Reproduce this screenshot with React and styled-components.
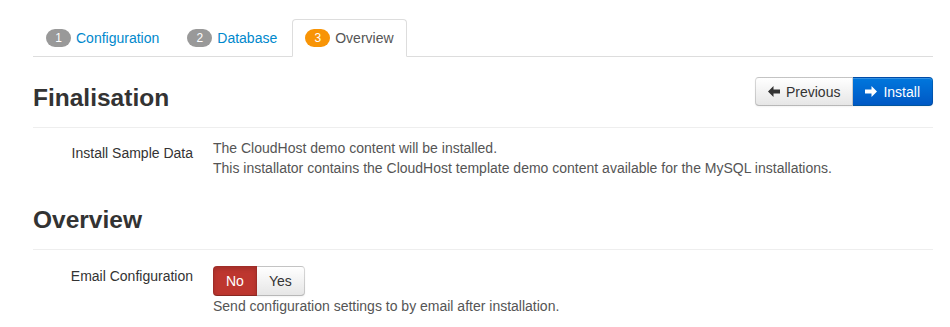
import React from 'react';
import styled, { createGlobalStyle } from 'styled-components';

const GlobalStyle = createGlobalStyle`
  body {
    margin: 0;
    background: #fff;
    font-family: "Liberation Sans", Arial, sans-serif;
    font-size: 14px;
    line-height: 20px;
    color: #333;
  }
`;

const Page = styled.div`
  padding: 19px 17px 0 33px;
`;

// pestañas del asistente
const Tabs = styled.ul`
  display: flex;
  margin: 0;
  padding: 0;
  list-style: none;
  border-bottom: 1px solid #ddd;
`;

const Tab = styled.li`
  display: flex;
  align-items: center;
  gap: 5px;
  margin: 0 2px -1px 0;
  padding: 8px 12px;
  line-height: 20px;
  border: 1px solid ${p => (p.$active ? '#ddd' : 'transparent')};
  border-bottom-color: ${p => (p.$active ? '#fff' : 'transparent')};
  border-radius: 4px 4px 0 0;
  background: ${p => (p.$active ? '#fff' : 'transparent')};
  color: ${p => (p.$active ? '#555' : '#0088cc')};
  cursor: pointer;
`;

const Badge = styled.span`
  display: inline-flex;
  align-items: center;
  justify-content: center;
  width: 25px;
  height: 18px;
  border-radius: 9px;
  background: ${p => (p.$active ? '#f89406' : '#999')};
  color: #fff;
  font-size: 12px;
  line-height: 18px;
`;

const HeaderRow = styled.div`
  display: flex;
  justify-content: space-between;
  align-items: flex-start;
  margin-top: 20px;
`;

const Heading = styled.h3`
  margin: ${p => p.$top || 0}px 0 0;
  font-size: 24.5px;
  font-weight: bold;
  line-height: 30px;
  color: #333;
`;

const Rule = styled.hr`
  margin: 14px 0 0;
  border: 0;
  border-top: 1px solid #eee;
`;

const BtnGroup = styled.div`
  display: flex;
`;

const Button = styled.button`
  display: inline-flex;
  align-items: center;
  gap: 6px;
  height: ${p => p.$h || 29}px;
  padding: 0 12px;
  font-family: inherit;
  font-size: 14px;
  line-height: 18px;
  cursor: pointer;
  border: 1px solid rgba(0, 0, 0, 0.15);
  border-bottom-color: rgba(0, 0, 0, 0.28);
  color: ${p => (p.$variant === 'default' ? '#333' : '#fff')};
  background: ${p =>
    p.$variant === 'primary'
      ? 'linear-gradient(#0077dd, #0058c4)'
      : p.$variant === 'danger'
      ? '#bd362f'
      : 'linear-gradient(#ffffff, #e6e6e6)'};
  box-shadow: ${p =>
    p.$variant === 'danger'
      ? 'inset 0 2px 4px rgba(0,0,0,0.15)'
      : 'inset 0 1px 0 rgba(255,255,255,0.2), 0 1px 2px rgba(0,0,0,0.05)'};

  &:first-child {
    border-radius: 4px 0 0 4px;
  }
  &:last-child {
    border-radius: 0 4px 4px 0;
    border-left: 0;
  }
`;

const ControlGroup = styled.div`
  display: flex;
  margin-top: ${p => p.$gap}px;
`;

const Label = styled.div`
  width: 160px;
  margin-right: 20px;
  padding-top: ${p => p.$pad || 0}px;
  text-align: right;
  color: #333;
`;

const Controls = styled.div`
  color: #555;
`;

const Help = styled.div`
  margin-top: 0;
  color: #555;
`;

function Arrow({ dir }) {
  return (
    <svg width="12" height="11" viewBox="0 0 12 11" fill="currentColor">
      {dir === 'left' ? (
        <path d="M0 5.5 L5.5 0 V3.5 H12 V7.5 H5.5 V11 Z" />
      ) : (
        <path d="M12 5.5 L6.5 0 V3.5 H0 V7.5 H6.5 V11 Z" />
      )}
    </svg>
  );
}

export default function App() {
  return (
    <Page>
      <GlobalStyle />
      <Tabs>
        <Tab><Badge>1</Badge>Configuration</Tab>
        <Tab><Badge>2</Badge>Database</Tab>
        <Tab $active><Badge $active>3</Badge>Overview</Tab>
      </Tabs>

      <HeaderRow>
        <Heading $top={6}>Finalisation</Heading>
        <BtnGroup>
          <Button $variant="default"><Arrow dir="left" />Previous</Button>
          <Button $variant="primary"><Arrow dir="right" />Install</Button>
        </BtnGroup>
      </HeaderRow>
      <Rule />

      <ControlGroup $gap={10}>
        <Label $pad={5}>Install Sample Data</Label>
        <Controls>
          The CloudHost demo content will be installed.
          <br />
          This installator contains the CloudHost template demo content available for the MySQL installations.
        </Controls>
      </ControlGroup>

      <Heading $top={27}>Overview</Heading>
      <Rule />

      <ControlGroup $gap={16}>
        <Label>Email Configuration</Label>
        <Controls>
          <BtnGroup>
            <Button $variant="danger" $h={30}>No</Button>
            <Button $variant="default" $h={30}>Yes</Button>
          </BtnGroup>
          <Help>Send configuration settings to by email after installation.</Help>
        </Controls>
      </ControlGroup>
    </Page>
  );
}
